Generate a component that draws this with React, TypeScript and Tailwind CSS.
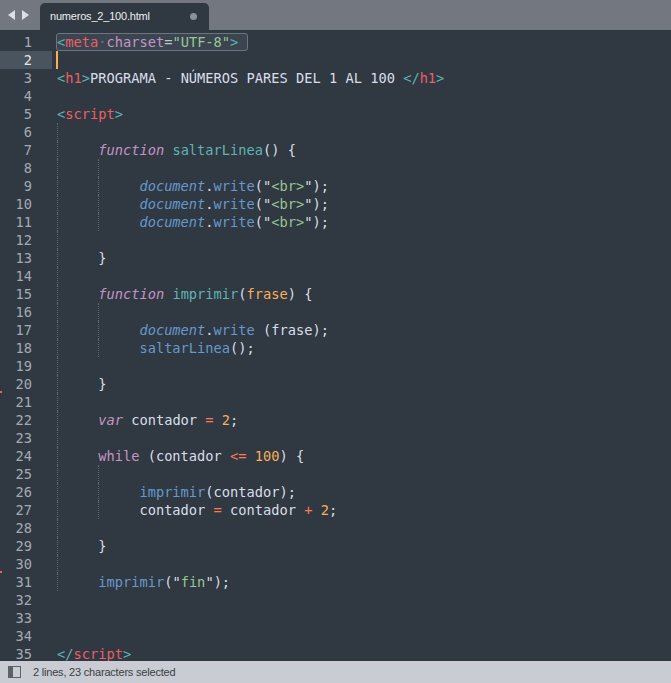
import React from "react";

type Tok = [string, string];
type Line = { guides: number; toks: Tok[]; mark?: boolean };

const W = "text-[#d8dee9]";
const T = "text-[#5fb4b4]";
const R = "text-[#ec5f66]";
const P = "text-[#c594c5]";
const PI = "text-[#c594c5] italic";
const G = "text-[#99c794]";
const B = "text-[#6699cc]";
const BI = "text-[#6699cc] italic";
const O = "text-[#f9ae58]";
const OP = "text-[#f97b58]";

const docWrite: Tok[] = [
  ["document", BI],
  [".", W],
  ["write", B],
  ["(", W],
  ['"', W],
  ["<br>", G],
  ['"', W],
  [");", W],
];

const lines: Line[] = [
  { guides: 0, toks: [] }, // line 1 is drawn separately (selected)
  { guides: 0, toks: [] },
  {
    guides: 0,
    toks: [
      ["<", T],
      ["h1", R],
      [">", T],
      ["PROGRAMA - NÚMEROS PARES DEL 1 AL 100 ", W],
      ["</", T],
      ["h1", R],
      [">", T],
    ],
  },
  { guides: 0, toks: [] },
  {
    guides: 0,
    toks: [
      ["<", T],
      ["script", R],
      [">", T],
    ],
  },
  { guides: 1, toks: [] },
  {
    guides: 0,
    toks: [
      ["     ", W],
      ["function", PI],
      [" ", W],
      ["saltarLinea", T],
      ["() {", W],
    ],
  },
  { guides: 2, toks: [] },
  { guides: 0, toks: [["          ", W], ...docWrite] },
  { guides: 0, toks: [["          ", W], ...docWrite] },
  { guides: 0, toks: [["          ", W], ...docWrite] },
  { guides: 1, toks: [] },
  { guides: 0, toks: [["     ", W], ["}", W]] },
  { guides: 1, toks: [] },
  {
    guides: 0,
    toks: [
      ["     ", W],
      ["function", PI],
      [" ", W],
      ["imprimir", T],
      ["(", W],
      ["frase", O],
      [") {", W],
    ],
  },
  { guides: 2, toks: [] },
  {
    guides: 0,
    toks: [
      ["          ", W],
      ["document", BI],
      [".", W],
      ["write", B],
      [" (frase);", W],
    ],
  },
  {
    guides: 0,
    toks: [
      ["          ", W],
      ["saltarLinea", B],
      ["();", W],
    ],
  },
  { guides: 1, toks: [] },
  { guides: 0, toks: [["     ", W], ["}", W]], mark: true },
  { guides: 1, toks: [] },
  {
    guides: 0,
    toks: [
      ["     ", W],
      ["var", PI],
      [" contador ", W],
      ["=", OP],
      [" ", W],
      ["2", O],
      [";", W],
    ],
  },
  { guides: 1, toks: [] },
  {
    guides: 0,
    toks: [
      ["     ", W],
      ["while", P],
      [" (contador ", W],
      ["<=", OP],
      [" ", W],
      ["100", O],
      [") {", W],
    ],
  },
  { guides: 2, toks: [] },
  {
    guides: 0,
    toks: [
      ["          ", W],
      ["imprimir", B],
      ["(contador);", W],
    ],
  },
  {
    guides: 0,
    toks: [
      ["          ", W],
      ["contador ", W],
      ["=", OP],
      [" contador ", W],
      ["+", OP],
      [" ", W],
      ["2", O],
      [";", W],
    ],
  },
  { guides: 1, toks: [] },
  { guides: 0, toks: [["     ", W], ["}", W]] },
  { guides: 1, toks: [], mark: true },
  {
    guides: 0,
    toks: [
      ["     ", W],
      ["imprimir", B],
      ["(", W],
      ['"', W],
      ["fin", G],
      ['"', W],
      [");", W],
    ],
  },
  { guides: 0, toks: [] },
  { guides: 0, toks: [] },
  { guides: 0, toks: [] },
  {
    guides: 0,
    toks: [
      ["</", T],
      ["script", R],
      [">", T],
    ],
  },
];

// which indent levels show a guide on a line (by line number)
function guidesFor(n: number): number {
  if (n >= 6 && n <= 31) {
    if ((n >= 8 && n <= 11) || (n >= 16 && n <= 18) || (n >= 25 && n <= 27)) return 2;
    return 1;
  }
  return 0;
}

function Guide() {
  return (
    <span className="inline-block h-[18px] align-top border-l border-dotted border-[#5a6570] -mr-px">
      {"     "}
    </span>
  );
}

function SelectedLine() {
  return (
    <span className="inline-block h-[18px] -ml-px -mt-px border border-[#6a7581] bg-[#3b4550] rounded-[3px] leading-[16px]">
      <span className={T}>{"<"}</span>
      <span className={R}>meta</span>
      <span className="text-[#6a7581]">·</span>
      <span className={P}>charset</span>
      <span className="text-[#c0c5ce]">=</span>
      <span className={G}>"UTF-8"</span>
      <span className={T}>{">"}</span>
      <span>{" "}</span>
    </span>
  );
}

export default function App() {
  return (
    <div className="w-[671px] h-[683px] flex flex-col overflow-hidden bg-[#303841]">
      {/* tab bar */}
      <div className="h-[30px] shrink-0 bg-[#73777f] flex items-end">
        <div className="w-[40px] h-full flex items-center pl-[8px] gap-[5px]">
          <svg width="8" height="10" viewBox="0 0 8 10">
            <path d="M7 0 L0 5 L7 10 Z" fill="#dcdfe4" />
          </svg>
          <svg width="8" height="10" viewBox="0 0 8 10">
            <path d="M1 0 L8 5 L1 10 Z" fill="#dcdfe4" />
          </svg>
        </div>
        <div className="w-[169px] h-[27px] bg-[#303841] rounded-t-[5px] flex items-center pl-[10px] pr-[12px] justify-between">
          <span className="text-[11px] tracking-[-0.2px] text-[#eceef1] font-['Liberation_Sans',sans-serif]">
            numeros_2_100.html
          </span>
          <span className="w-[7px] h-[7px] rounded-full bg-[#8b9098]" />
        </div>
      </div>

      {/* editor */}
      <div className="flex-1 min-h-0 overflow-hidden pt-[3px] font-['DejaVu_Sans_Mono',monospace] text-[13.7px] leading-[18px]">
        {lines.map((line, i) => {
          const n = i + 1;
          const current = n === 2;
          const g = guidesFor(n);
          return (
            <div key={n} className="flex h-[18px]">
              <div
                className={`relative w-[52px] shrink-0 text-right pr-[20px] ${
                  current ? "bg-[#4a545f] text-[#e2e5ea]" : "text-[#a4aab5]"
                }`}
              >
                {n}
                {line.mark && (
                  <span className="absolute left-0 bottom-0 w-[2px] h-[2px] bg-[#ec5f66]" />
                )}
              </div>
              <div className="pl-[5px] whitespace-pre relative">
                {n === 1 && <SelectedLine />}
                {current && (
                  <span className="inline-block w-[2px] h-[18px] align-top -ml-[1px] bg-[#f9ae58]" />
                )}
                {line.toks.length === 0 &&
                  Array.from({ length: g }).map((_, k) => <Guide key={k} />)}
                {line.toks.length > 0 &&
                  line.toks.map((t, k) => {
                    // first token is indentation: draw guides inside it
                    if (k === 0 && /^ +$/.test(t[0]) && g > 0) {
                      const levels = t[0].length / 5;
                      return (
                        <React.Fragment key={k}>
                          {Array.from({ length: levels }).map((_, j) =>
                            j < g ? <Guide key={j} /> : <span key={j}>{"     "}</span>
                          )}
                        </React.Fragment>
                      );
                    }
                    return (
                      <span key={k} className={t[1]}>
                        {t[0]}
                      </span>
                    );
                  })}
              </div>
            </div>
          );
        })}
      </div>

      {/* status bar */}
      <div className="h-[22px] shrink-0 bg-[#c9ccd3] flex items-center pl-[8px] gap-[12px] font-['Liberation_Sans',sans-serif] text-[11px] tracking-[-0.2px] text-[#3a3e44]">
        <span className="w-[13px] h-[12px] border border-[#5c6168] flex">
          <span className="w-[4px] h-full bg-[#5c6168]" />
        </span>
        <span>2 lines, 23 characters selected</span>
      </div>
    </div>
  );
}
